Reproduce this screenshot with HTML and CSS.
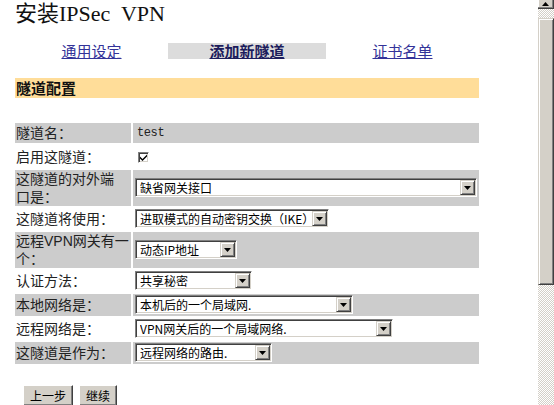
FILE: index.html
```html
<!DOCTYPE html>
<html lang="zh-CN">
<head>
    <meta charset="UTF-8">
    <title>安装IPSec VPN</title>
    <link rel="stylesheet" href="styles.css">
</head>
<body>
<div class="screen">
    <div class="page">
        <h1 class="title">安装IPSec&nbsp; VPN</h1>

        <div class="tabs">
            <div class="tab"><a href="#">通用设定</a></div>
            <div class="tab tab-current"><a href="#">添加新隧道</a></div>
            <div class="tab"><a href="#">证书名单</a></div>
        </div>

        <div class="section-head">隧道配置</div>

        <table class="config">
            <tr class="shade">
                <td class="label">隧道名：</td>
                <td class="value plain">test</td>
            </tr>
            <tr>
                <td class="label">启用这隧道：</td>
                <td class="value">
                    <span class="check"><svg width="7" height="7" viewBox="0 0 7 7"><path d="M0 2.5l2.5 2.5 4.5-4.5v2l-4.5 4.5-2.5-2.5z" fill="#000"/></svg></span>
                </td>
            </tr>
            <tr class="shade">
                <td class="label two-line">这隧道的对外端<br>口是：</td>
                <td class="value">
                    <span class="select sel-port"><select><option>缺省网关接口</option></select><span class="drop"><svg width="7" height="4"><path d="M0 0h7L3.5 4z"/></svg></span></span>
                </td>
            </tr>
            <tr>
                <td class="label">这隧道将使用：</td>
                <td class="value">
                    <span class="select sel-mode"><select><option>进取模式的自动密钥交换（IKE）.</option></select><span class="drop"><svg width="7" height="4"><path d="M0 0h7L3.5 4z"/></svg></span></span>
                </td>
            </tr>
            <tr class="shade">
                <td class="label two-line">远程VPN网关有一<br>个：</td>
                <td class="value">
                    <span class="select sel-gw"><select><option>动态IP地址</option></select><span class="drop"><svg width="7" height="4"><path d="M0 0h7L3.5 4z"/></svg></span></span>
                </td>
            </tr>
            <tr>
                <td class="label">认证方法：</td>
                <td class="value">
                    <span class="select sel-auth"><select><option>共享秘密</option></select><span class="drop"><svg width="7" height="4"><path d="M0 0h7L3.5 4z"/></svg></span></span>
                </td>
            </tr>
            <tr class="shade">
                <td class="label">本地网络是：</td>
                <td class="value">
                    <span class="select sel-local"><select><option>本机后的一个局域网.</option></select><span class="drop"><svg width="7" height="4"><path d="M0 0h7L3.5 4z"/></svg></span></span>
                </td>
            </tr>
            <tr>
                <td class="label">远程网络是：</td>
                <td class="value">
                    <span class="select sel-remote"><select><option>VPN网关后的一个局域网络.</option></select><span class="drop"><svg width="7" height="4"><path d="M0 0h7L3.5 4z"/></svg></span></span>
                </td>
            </tr>
            <tr class="shade">
                <td class="label">这隧道是作为：</td>
                <td class="value">
                    <span class="select sel-role"><select><option>远程网络的路由.</option></select><span class="drop"><svg width="7" height="4"><path d="M0 0h7L3.5 4z"/></svg></span></span>
                </td>
            </tr>
        </table>

        <div class="actions">
            <button class="btn">上一步</button>
            <button class="btn">继续</button>
        </div>
    </div>

    <div class="scrollbar">
        <div class="sb-arrow"><svg width="7" height="4"><path d="M0 4h7L3.5 0z"/></svg></div>
        <div class="sb-thumb"></div>
    </div>
</div>
</body>
</html>
```

FILE: styles.css
```css
* {
    box-sizing: border-box;
}
body {
    margin: 0;
    background: #fff;
    font-family: "Noto Sans CJK SC", sans-serif;
    color: #222;
    overflow: hidden;
}
.screen {
    display: flex;
    height: 405px;
}
.page {
    flex: 1;
    padding-left: 15px;
}
.title {
    margin: 0;
    font: normal 22px/28px "Liberation Serif", "Noto Sans CJK SC", serif;
    color: #111;
}
.tabs {
    display: grid;
    grid-template-columns: 153px 158px 153px;
    margin-top: 15px;
}
.tab {
    height: 16px;
    text-align: center;
    font-size: 15px;
    line-height: 16px;
}
.tab a {
    color: #333399;
}
.tab-current {
    background: #dcdcdc;
}
.tab-current a {
    color: #1c1c5c;
    font-weight: bold;
}
.section-head {
    margin-top: 19px;
    width: 464px;
    height: 20px;
    padding-left: 1px;
    background: #ffdd99;
    color: #111;
    font-size: 15px;
    font-weight: bold;
    line-height: 20px;
}
.config {
    margin: 23px 0 0 -2px;
    width: 468px;
    border-collapse: separate;
    border-spacing: 2px;
}
.config td {
    padding: 1px;
    font-size: 14px;
    line-height: 18px;
    vertical-align: middle;
}
.config .label {
    width: 116px;
    font-family: "Liberation Sans", "Noto Sans CJK SC", sans-serif;
}
.config .two-line {
    padding: 0 1px;
}
.config .shade td {
    background: #cccccc;
}
.config .value {
    padding: 1px 2px 2px;
}
.config .plain {
    padding: 1px 4px;
    font: 12px/18px "Liberation Mono", monospace;
    letter-spacing: -0.4px;
}
.check {
    display: inline-flex;
    align-items: center;
    justify-content: center;
    width: 11px;
    height: 11px;
    margin: 4px 0 3px 3px;
    border: 1px solid;
    border-color: #808080 #fff #fff #808080;
    box-shadow: inset 1px 1px #404040, inset -1px -1px #d4d0c8;
    background: #fff;
    vertical-align: middle;
}
.select {
    display: flex;
    height: 19px;
    padding: 1px;
    border: 1px solid;
    border-color: #808080 #fff #fff #808080;
    box-shadow: inset 1px 1px #404040, inset -1px -1px #d4d0c8;
    background: #fff;
}
.select select {
    appearance: none;
    flex: 1;
    min-width: 0;
    height: 15px;
    padding: 0 3px;
    border: 0;
    background: transparent;
    color: #000;
    font: 12px/15px "Noto Sans CJK SC", sans-serif;
}
.drop {
    display: flex;
    align-items: center;
    justify-content: center;
    width: 15px;
    height: 15px;
    border: 1px solid;
    border-color: #d4d0c8 #404040 #404040 #d4d0c8;
    box-shadow: inset 1px 1px #fff, inset -1px -1px #808080;
    background: #d4d0c8;
}
.sel-port { width: 100%; }
.sel-mode { width: 194px; }
.sel-gw { width: 102px; }
.sel-auth { width: 117px; }
.sel-local { width: 218px; }
.sel-remote { width: 258px; }
.sel-role { width: 137px; }
.actions {
    display: flex;
    gap: 6px;
    margin-top: 19px;
    padding-left: 8px;
}
.btn {
    padding: 2px 6px;
    border: 1px solid;
    border-color: #fff #404040 #404040 #fff;
    box-shadow: inset -1px -1px #808080;
    background: #d4d0c8;
    color: #000;
    font: 12px/15px "Noto Sans CJK SC", sans-serif;
}
.scrollbar {
    flex: none;
    width: 16px;
    display: flex;
    flex-direction: column;
    background: repeating-conic-gradient(#d4d0c8 0 25%, #fff 0 50%) 0 0 / 2px 2px;
}
.sb-arrow {
    display: flex;
    justify-content: center;
    height: 9px;
    padding-top: 2px;
    border-right: 1px solid #404040;
    border-bottom: 1px solid #404040;
    box-shadow: inset -1px -1px #808080, inset 1px 0 #fff;
    background: #d4d0c8;
}
.sb-thumb {
    margin-top: 9px;
    height: 267px;
    border: 1px solid;
    border-color: #d4d0c8 #404040 #404040 #d4d0c8;
    box-shadow: inset 1px 1px #fff, inset -1px -1px #808080;
    background: #d4d0c8;
}
```
